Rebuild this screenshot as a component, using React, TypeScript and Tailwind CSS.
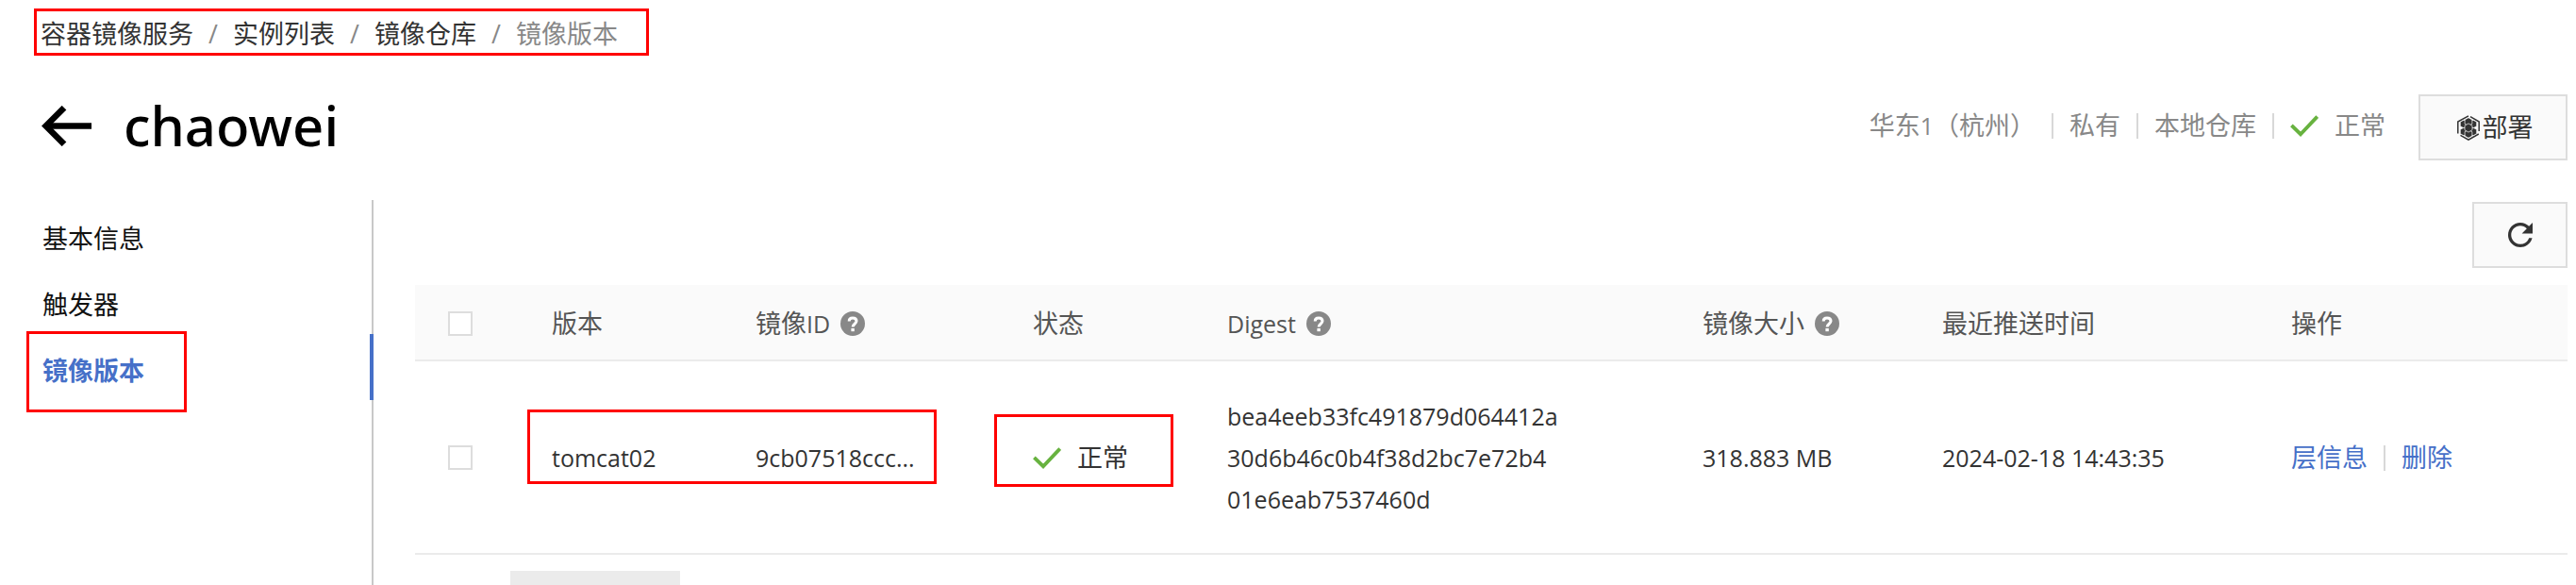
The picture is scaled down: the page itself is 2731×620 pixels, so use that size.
import type { ReactNode } from "react";

const crumbs = ["容器镜像服务", "实例列表", "镜像仓库"];

const digestLines = ["bea4eeb33fc491879d064412a", "30d6b46c0b4f38d2bc7e72b4", "01e6eab7537460d"];

function BackArrow() {
  return (
    <svg className="h-[43px] w-[53px]" viewBox="0 0 53 43" fill="none" stroke="currentColor" strokeWidth="6.6" aria-hidden="true">
      <path d="M53 21.5H5" />
      <path d="M24 2.2 4.700 21.5 24 40.8" />
    </svg>
  );
}

function Check() {
  return (
    <svg className="h-[23px] w-[30px] shrink-0 text-[#67b23f]" viewBox="0 0 30 23" fill="none" stroke="currentColor" strokeWidth="3.800" aria-hidden="true">
      <path d="M1.400 10.800 11 20.200 28.700 1.500" />
    </svg>
  );
}

function Refresh() {
  return (
    <svg className="size-[26px]" viewBox="4 4 16 16" fill="currentColor" aria-hidden="true">
      <path d="M17.65 6.35A7.958 7.958 0 0 0 12 4c-4.42 0-7.99 3.58-7.99 8s3.57 8 7.99 8c3.73 0 6.84-2.55 7.73-6h-2.08A5.99 5.99 0 0 1 12 18c-3.31 0-6-2.69-6-6s2.69-6 6-6c1.66 0 3.14.69 4.22 1.78L13 11h7V4z" />
    </svg>
  );
}

function Help() {
  return (
    <svg className="size-[26px] shrink-0" viewBox="0 0 26 26" fill="none" aria-hidden="true">
      <circle cx="13" cy="13" r="13" fill="#888" />
      <path d="M9.2 10.4C9.2 8 10.8 7 13 7s4 1.100 4 3.300c0 2.900-3.900 3-3.900 6.300" stroke="#fff" strokeWidth="3" />
      <rect x="11.400" y="18" width="3.400" height="3.200" fill="#fff" />
    </svg>
  );
}

function Cluster() {
  return (
    <svg className="h-[27px] w-[24px] shrink-0" viewBox="0 0 24 27" fill="currentColor" aria-hidden="true">
      <path
        d="M14 1.700 23.200 7v10M22.800 20 12 26.200 3.500 21.300M.800 19.500V7L12 .800"
        fill="none"
        stroke="currentColor"
        strokeWidth="1.500"
      />
      <g stroke="#fafafa" strokeWidth=".7">
        <path d="M7 5.200 10.700 7.300V11.700L7 13.800 3.300 11.700V7.300z" />
        <path d="M17 5.200 20.700 7.300V11.700L17 13.800 13.300 11.700V7.300z" />
        <path d="M7 13.200 10.700 15.300V19.700L7 21.800 3.300 19.700V15.300z" />
        <path d="M17 13.200 20.700 15.300V19.700L17 21.800 13.300 19.700V15.300z" />
        <path d="M12 2.700 15.900 4.900V9.300L12 11.500 8.100 9.300V4.900z" />
        <path d="M12 15.500 15.900 17.700V22.100L12 24.300 8.100 22.100V17.700z" />
        <path d="M12 8.900 16 11.200V15.800L12 18.100 8 15.800V11.200z" />
      </g>
    </svg>
  );
}

function Divider() {
  return <span className="h-[27px] w-[2px] bg-[#d8d8d8]" />;
}

function Latin({ children }: { children: ReactNode }) {
  return <span className="text-[25px]">{children}</span>;
}

function Tick({ label }: { label: string }) {
  return (
    <input
      type="checkbox"
      aria-label={label}
      className="block size-[26px] appearance-none border-2 border-[#ddd] bg-white checked:bg-[#4670c8]"
    />
  );
}

function HeadCell({ children, help }: { children?: ReactNode; help?: boolean }) {
  return (
    <th scope="col" className="border-b-2 border-[#ebebeb] py-0 pl-[35px] text-left font-normal">
      <span className="flex h-[79px] items-center gap-[11px] pt-[3px] whitespace-nowrap">
        {children}
        {help && <Help />}
      </span>
    </th>
  );
}

function Cell({ children }: { children: ReactNode }) {
  return <td className="border-b-2 border-[#ebebeb] pt-9 pb-[35px] pl-[35px] whitespace-nowrap">{children}</td>;
}

export default function App() {
  return (
    <div className="flex min-h-screen flex-col bg-white font-['Open_Sans','Noto_Sans_CJK_SC',sans-serif] text-[27px] leading-[44px] text-[#333]">
      <nav aria-label="breadcrumb" className="mt-[9px] ml-9 flex h-[50px] w-fit items-center border-3 border-[#f00] pt-1 pr-[30px] pl-1">
        {crumbs.map((name) => (
          <span key={name} className="flex">
            <a href="#">{name}</a>
            <span className="w-[42px] text-center text-[#888]">/</span>
          </span>
        ))}
        <span className="text-[#888]">镜像版本</span>
      </nav>

      <header className="mt-[41px] flex items-start justify-between pr-[9px] pl-[44px] text-black">
        <div className="flex items-center gap-[34px]">
          <a href="#" aria-label="返回">
            <BackArrow />
          </a>
          <h1 className="font-['Noto_Sans','Noto_Sans_CJK_SC',sans-serif] text-[58px] leading-[66px] font-medium">chaowei</h1>
        </div>
        <div className="flex items-start gap-[35px]">
          <div className="flex h-[66px] items-center gap-[17px] text-[#888]">
            <span>
              华东<Latin>1</Latin>（杭州）
            </span>
            <Divider />
            <span>私有</span>
            <Divider />
            <span>本地仓库</span>
            <Divider />
            <Check />
            <span>正常</span>
          </div>
          <button type="button" className="flex h-[70px] w-[158px] items-center justify-center gap-[3px] border-2 border-[#ddd] bg-[#fafafa] pl-1 text-[#333]">
            <Cluster />
            部署
          </button>
        </div>
      </header>

      <div className="mt-[42px] flex flex-1">
        <aside className="w-[396px] shrink-0 border-r-2 border-[#c8c8c8] pt-[2px] text-[#111]">
          <a href="#" className="flex h-[70px] items-center pt-2 pl-[45px]">
            基本信息
          </a>
          <a href="#" className="flex h-[70px] items-center pt-2 pl-[45px]">
            触发器
          </a>
          <a
            href="#"
            aria-current="page"
            className="relative -mr-[2px] flex h-[70px] items-center border-r-4 border-[#4670c8] pt-2 pl-[45px] font-bold text-[#4670c8]"
          >
            镜像版本
            <span className="absolute -top-[3px] left-7 h-[86px] w-[170px] border-3 border-[#f00]" />
          </a>
        </aside>

        <main className="flex min-w-0 flex-1 flex-col pt-[2px] pr-[9px] pl-[44px]">
          <button
            type="button"
            aria-label="刷新"
            className="flex h-[70px] w-[101px] items-center justify-center self-end border-2 border-[#ddd] bg-[#fafafa]"
          >
            <Refresh />
          </button>

          <table className="mt-[18px] w-full table-fixed border-separate border-spacing-0">
            <colgroup>
              <col className="w-[110px]" />
              <col className="w-[216px]" />
              <col className="w-[294px]" />
              <col className="w-[206px]" />
              <col className="w-[504px]" />
              <col className="w-[254px]" />
              <col className="w-[370px]" />
              <col />
            </colgroup>
            <thead className="bg-[#fafafa] text-[#555]">
              <tr>
                <HeadCell>
                  <Tick label="全选" />
                </HeadCell>
                <HeadCell>版本</HeadCell>
                <HeadCell help>
                  <span>
                    镜像<Latin>ID</Latin>
                  </span>
                </HeadCell>
                <HeadCell>状态</HeadCell>
                <HeadCell help>
                  <Latin>Digest</Latin>
                </HeadCell>
                <HeadCell help>镜像大小</HeadCell>
                <HeadCell>最近推送时间</HeadCell>
                <HeadCell>操作</HeadCell>
              </tr>
            </thead>
            <tbody>
              <tr>
                <Cell>
                  <Tick label="tomcat02" />
                </Cell>
                <Cell>
                  <div className="relative">
                    <Latin>tomcat02</Latin>
                    <span className="absolute -top-[29px] -left-[26px] h-[79px] w-[434px] border-3 border-[#f00]" />
                  </div>
                </Cell>
                <Cell>
                  <Latin>9cb07518ccc...</Latin>
                </Cell>
                <Cell>
                  <div className="relative flex items-center gap-[17px]">
                    <Check />
                    正常
                    <span className="absolute -top-[24px] -left-[41px] h-[77px] w-[190px] border-3 border-[#f00]" />
                  </div>
                </Cell>
                <Cell>
                  {digestLines.map((line) => (
                    <div key={line} className="text-[25px]">
                      {line}
                    </div>
                  ))}
                </Cell>
                <Cell>
                  <Latin>318.883 MB</Latin>
                </Cell>
                <Cell>
                  <Latin>2024-02-18 14:43:35</Latin>
                </Cell>
                <Cell>
                  <div className="flex items-center gap-[17px] text-[#4670c8]">
                    <a href="#">层信息</a>
                    <Divider />
                    <a href="#">删除</a>
                  </div>
                </Cell>
              </tr>
            </tbody>
          </table>
          <div className="mt-[17px] ml-[101px] min-h-[15px] w-[180px] flex-1 bg-[#ebebeb]" />
        </main>
      </div>
    </div>
  );
}
